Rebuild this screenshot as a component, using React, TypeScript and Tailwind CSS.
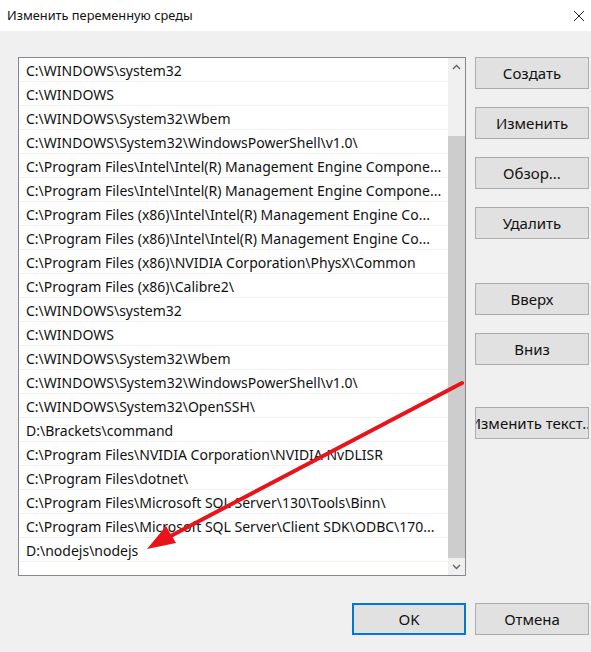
import React from "react";

const items = [
  "C:\\WINDOWS\\system32",
  "C:\\WINDOWS",
  "C:\\WINDOWS\\System32\\Wbem",
  "C:\\WINDOWS\\System32\\WindowsPowerShell\\v1.0\\",
  "C:\\Program Files\\Intel\\Intel(R) Management Engine Compone...",
  "C:\\Program Files\\Intel\\Intel(R) Management Engine Compone...",
  "C:\\Program Files (x86)\\Intel\\Intel(R) Management Engine Co...",
  "C:\\Program Files (x86)\\Intel\\Intel(R) Management Engine Co...",
  "C:\\Program Files (x86)\\NVIDIA Corporation\\PhysX\\Common",
  "C:\\Program Files (x86)\\Calibre2\\",
  "C:\\WINDOWS\\system32",
  "C:\\WINDOWS",
  "C:\\WINDOWS\\System32\\Wbem",
  "C:\\WINDOWS\\System32\\WindowsPowerShell\\v1.0\\",
  "C:\\WINDOWS\\System32\\OpenSSH\\",
  "D:\\Brackets\\command",
  "C:\\Program Files\\NVIDIA Corporation\\NVIDIA NvDLISR",
  "C:\\Program Files\\dotnet\\",
  "C:\\Program Files\\Microsoft SQL Server\\130\\Tools\\Binn\\",
  "C:\\Program Files\\Microsoft SQL Server\\Client SDK\\ODBC\\170...",
  "D:\\nodejs\\nodejs",
];

function Btn({ label, primary }: { label: string; primary?: boolean }) {
  return (
    <div
      className={
        "h-[32px] w-[114px] flex items-center justify-center overflow-hidden whitespace-nowrap bg-[#e1e1e1] text-[15px] text-[#111] " +
        (primary ? "border-2 border-[#0078d7]" : "border border-[#adadad]")
      }
    >
      {label}
    </div>
  );
}

export default function App() {
  return (
    <div className="relative w-[591px] h-[652px] bg-[#f0f0f0] font-['Segoe_UI','Noto_Sans',sans-serif] overflow-hidden">
      <div className="h-[31px] bg-white flex items-center justify-between pl-[7px] pr-[6px]">
        <span className="text-[12.8px] text-[#111]">Изменить переменную среды</span>
        <svg width="12" height="12" viewBox="0 0 12 12">
          <path d="M1 1 L11 11 M11 1 L1 11" stroke="#222" strokeWidth="1" fill="none" />
        </svg>
      </div>
      <div className="flex pt-[26px] pl-[18px] gap-[9px]">
        <div className="w-[448px] h-[519px] border border-[#828790] bg-white flex">
          <div className="flex-1 overflow-hidden">
            {items.map((t, i) => (
              <div
                key={i}
                className="h-[24px] border-b border-[#f0f0f0] pl-[7px] pt-[1px] flex items-center whitespace-nowrap overflow-hidden text-[14px] text-[#111]"
              >
                {t}
              </div>
            ))}
          </div>
          <div className="w-[17px] bg-[#f0f0f0] flex flex-col">
            <div className="h-[17px] flex items-center justify-center">
              <svg width="9" height="6" viewBox="0 0 9 6">
                <path d="M1 5 L4.5 1.5 L8 5" stroke="#606060" strokeWidth="1.3" fill="none" />
              </svg>
            </div>
            <div className="h-[61px]" />
            <div className="flex-1 bg-[#cdcdcd]" />
            <div className="h-[17px] flex items-center justify-center">
              <svg width="9" height="6" viewBox="0 0 9 6">
                <path d="M1 1 L4.5 4.5 L8 1" stroke="#606060" strokeWidth="1.3" fill="none" />
              </svg>
            </div>
          </div>
        </div>
        <div className="flex flex-col">
          <Btn label="Создать" />
          <div className="h-[18px]" />
          <Btn label="Изменить" />
          <div className="h-[18px]" />
          <Btn label="Обзор..." />
          <div className="h-[18px]" />
          <Btn label="Удалить" />
          <div className="h-[44px]" />
          <Btn label="Вверх" />
          <div className="h-[18px]" />
          <Btn label="Вниз" />
          <div className="h-[42px]" />
          <Btn label="Изменить текст..." />
        </div>
      </div>
      <div className="flex justify-end gap-[9px] pr-[2px] mt-[27px]">
        <Btn label="OK" primary />
        <Btn label="Отмена" />
      </div>
      <svg
        className="absolute left-0 top-0 pointer-events-none"
        width="591"
        height="652"
        viewBox="0 0 591 652"
      >
        <line x1="462" y1="383" x2="165" y2="539" stroke="#e8141b" strokeWidth="4" strokeLinecap="round" />
        <polygon points="147,549 176,543 166,526" fill="#e8141b" />
      </svg>
    </div>
  );
}
